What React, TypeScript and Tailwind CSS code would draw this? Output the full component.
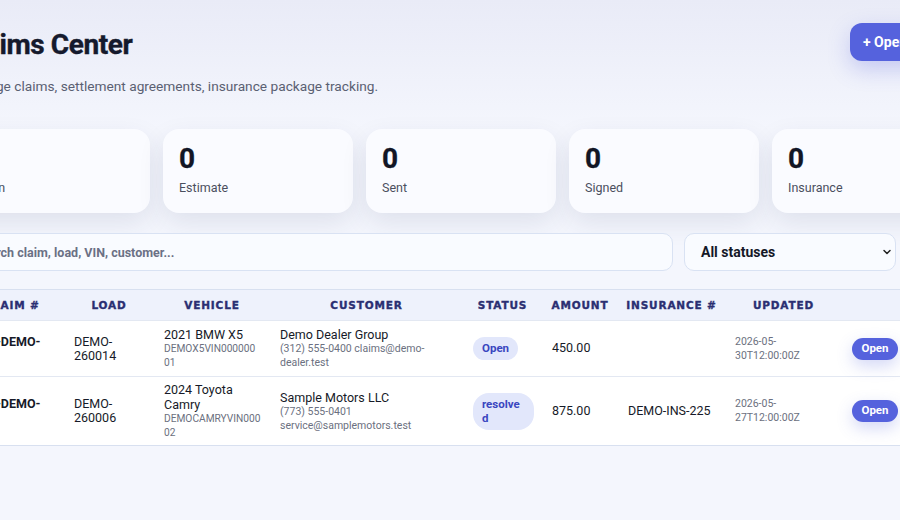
import { ChevronDown } from "lucide-react";

type Claim = {
	id: string;
	claimLines: string[];
	loadLines: string[];
	vehicle: string[];
	vin: string[];
	customer: string;
	contact: string[];
	status: string[];
	statusW: string;
	amount: string;
	insurance: string;
	updated: string[];
	rowH: string;
};

const stats = [
	{ value: 0, label: "Open" },
	{ value: 0, label: "Estimate" },
	{ value: 0, label: "Sent" },
	{ value: 0, label: "Signed" },
	{ value: 0, label: "Insurance" },
];

const claims: Claim[] = [
	{
		id: "c1",
		claimLines: ["CLM-DEMO-", "01"],
		loadLines: ["DEMO-", "260014"],
		vehicle: ["2021 BMW X5"],
		vin: ["DEMOX5VIN000000", "01"],
		customer: "Demo Dealer Group",
		contact: ["(312) 555-0400 claims@demo-", "dealer.test"],
		status: ["Open"],
		statusW: "",
		amount: "450.00",
		insurance: "",
		updated: ["2026-05-", "30T12:00:00Z"],
		rowH: "h-[56px]",
	},
	{
		id: "c2",
		claimLines: ["CLM-DEMO-", "02"],
		loadLines: ["DEMO-", "260006"],
		vehicle: ["2024 Toyota", "Camry"],
		vin: ["DEMOCAMRYVIN000", "02"],
		customer: "Sample Motors LLC",
		contact: ["(773) 555-0401", "service@samplemotors.test"],
		status: ["resolve", "d"],
		statusW: "w-[61px]",
		amount: "875.00",
		insurance: "DEMO-INS-225",
		updated: ["2026-05-", "27T12:00:00Z"],
		rowH: "h-[68px]",
	},
];

const headers = [
	"Claim #",
	"Load",
	"Vehicle",
	"Customer",
	"Status",
	"Amount",
	"Insurance #",
	"Updated",
	"",
];

const Lines = ({ lines }: { lines: string[] }) => (
	<>
		{lines.map((l) => (
			<div key={l}>{l}</div>
		))}
	</>
);

const StatCard = ({ value, label }: { value: number; label: string }) => (
	<div className="h-[84px] rounded-2xl bg-[#fafbff] px-4 pt-[14px] shadow-[0_10px_26px_rgba(40,48,90,0.10)]">
		<div className="text-[28px] font-bold leading-[32px] text-[#121625] [-webkit-text-stroke:0.3px_#121625]">
			{value}
		</div>
		<div className="mt-[5px] text-[12.5px] leading-[16px] text-[#4a4f5e]">
			{label}
		</div>
	</div>
);

export default function App() {
	return (
		<div className="min-h-screen w-full overflow-hidden bg-[linear-gradient(180deg,#e9ebf7_0px,#f4f6fd_130px)] font-['Roboto',sans-serif]">
			<div className="-ml-10 w-[1002px] pt-[23px]">
				<div className="flex items-start justify-between">
					<div className="pt-[5px]">
						<h1 className="text-[28px] font-bold leading-[34px] tracking-[-0.015em] text-[#151a2d] [-webkit-text-stroke:0.4px_#151a2d]">
							Claims Center
						</h1>
						<p className="mt-[14px] text-[13.7px] leading-[20px] text-[#5a6072]">
							Damage claims, settlement agreements, insurance package tracking.
						</p>
					</div>
					<button className="h-[38px] w-[112px] rounded-xl bg-[#5562dd] pl-[13px] text-left text-[14px] font-bold text-white shadow-[0_8px_22px_rgba(85,98,221,0.28)]">
						+ Open claim
					</button>
				</div>

				<div className="mt-[33px] grid grid-cols-5 gap-[13px]">
					{stats.map((s) => (
						<StatCard key={s.label} value={s.value} label={s.label} />
					))}
				</div>

				<div className="mt-[20px] flex gap-[11px]">
					<input
						className="h-[38px] flex-1 rounded-[10px] border border-[#d9e2f3] bg-[#f9fbff] pl-[14px] text-[12.5px] font-bold outline-none placeholder:text-[#6b7085]"
						placeholder="Search claim, load, VIN, customer..."
					/>
					<div className="flex h-[38px] w-[212px] items-center justify-between rounded-[10px] border border-[#d9e2f3] bg-[#f9fbff] pl-4 pr-[2px]">
						<span className="text-[14px] font-bold text-[#141827]">
							All statuses
						</span>
						<ChevronDown size={12} strokeWidth={3} className="text-[#222]" />
					</div>
					<button className="h-[38px] w-[55px] rounded-[10px] border border-[#d9e2f3] bg-[#f9fbff] text-[12px] font-bold text-[#2b3170]">
						Reset
					</button>
				</div>

				<table className="mt-[18px] w-full table-fixed border-collapse border-y border-[#d8e0f0] bg-white">
					<colgroup>
						<col className="w-[104px]" />
						<col className="w-[90px]" />
						<col className="w-[116px]" />
						<col className="w-[193px]" />
						<col className="w-[79px]" />
						<col className="w-[76px]" />
						<col className="w-[107px]" />
						<col className="w-[117px]" />
						<col className="w-[120px]" />
					</colgroup>
					<thead>
						<tr className="h-[31px] bg-[#eef2fc]">
							{headers.map((h) => (
								<th
									key={h || "action"}
									className="px-[2px] pt-[1px] text-center font-['DejaVu_Sans',sans-serif] text-[10.5px] font-bold uppercase tracking-[0.08em] whitespace-nowrap text-[#2a2f72] [-webkit-text-stroke:0.35px_#2a2f72]"
								>
									{h}
								</th>
							))}
						</tr>
					</thead>
					<tbody>
						{claims.map((c) => (
							<tr
								key={c.id}
								className={`${c.rowH} border-t border-[#e3e8f2] align-middle text-[12.5px] text-[#161a28]`}
							>
								<td className="px-[10px] font-bold leading-[14px]">
									<Lines lines={c.claimLines} />
								</td>
								<td className="px-[10px] leading-[14px]">
									<Lines lines={c.loadLines} />
								</td>
								<td className="px-[10px] py-[5px]">
									<div className="leading-[15px]">
										<Lines lines={c.vehicle} />
									</div>
									<div className="text-[10.2px] leading-[14px] text-[#6b7080]">
										<Lines lines={c.vin} />
									</div>
								</td>
								<td className="px-[10px] py-[5px]">
									<div className="leading-[15px]">{c.customer}</div>
									<div className="text-[10.5px] leading-[14px] text-[#6b7080]">
										<Lines lines={c.contact} />
									</div>
								</td>
								<td className="px-[10px]">
									<span
										className={`${c.statusW} inline-block rounded-2xl bg-[#e2e7fb] px-[9px] py-[4px] text-[11.5px] font-bold leading-[14.5px] text-[#3a46c0]`}
									>
										<Lines lines={c.status} />
									</span>
								</td>
								<td className="px-[10px]">{c.amount}</td>
								<td className="px-[10px]">{c.insurance}</td>
								<td className="px-[10px] text-[10.5px] leading-[14px] text-[#6b7080]">
									<Lines lines={c.updated} />
								</td>
								<td className="px-[10px]">
									<button className="h-[22px] w-[46px] rounded-[11px] bg-[#5562dd] text-[11.5px] font-bold text-white shadow-[0_6px_16px_rgba(85,98,221,0.25)]">
										Open
									</button>
								</td>
							</tr>
						))}
					</tbody>
				</table>
			</div>
		</div>
	);
}
